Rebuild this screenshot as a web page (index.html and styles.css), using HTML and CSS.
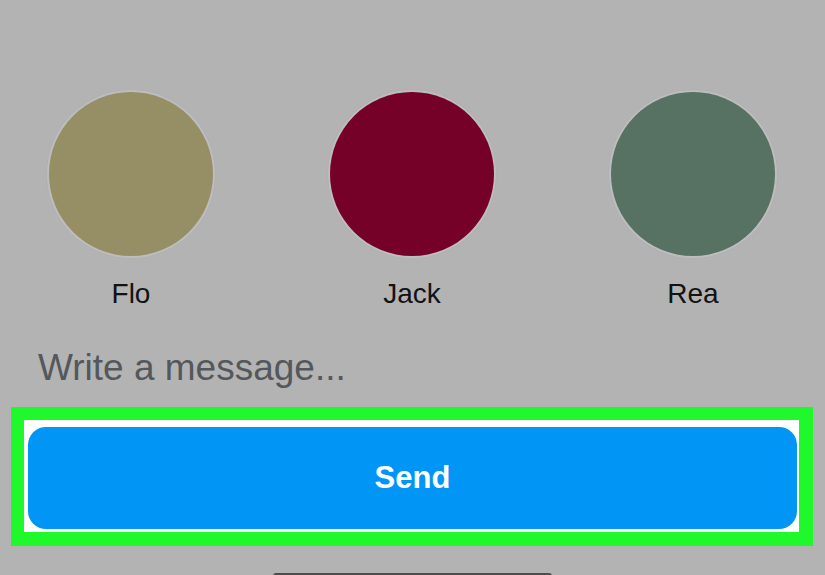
FILE: index.html
```html
<!DOCTYPE html>
<html lang="en">
<head>
<meta charset="utf-8">
<title>Send to</title>
<link rel="stylesheet" href="styles.css">
</head>
<body>
<div class="screen">
  <div class="contacts">
    <div class="contact">
      <div class="avatar avatar-flo"></div>
      <div class="name">Flo</div>
    </div>
    <div class="contact">
      <div class="avatar avatar-jack"></div>
      <div class="name">Jack</div>
    </div>
    <div class="contact">
      <div class="avatar avatar-rea"></div>
      <div class="name">Rea</div>
    </div>
  </div>
  <div class="message">Write a message...</div>
  <div class="highlight">
    <button class="send">Send</button>
  </div>
  <div class="home-indicator"></div>
</div>
</body>
</html>
```

FILE: styles.css
```css
html, body {
  margin: 0;
  padding: 0;
}
body {
  background: #b3b3b3;
  font-family: "Liberation Sans", Arial, sans-serif;
  width: 825px;
  height: 575px;
  overflow: hidden;
}
.screen {
  display: flex;
  flex-direction: column;
}
.contacts {
  display: flex;
  gap: 117px;
  padding-top: 92px;
  padding-left: 49px;
}
.contact {
  width: 164px;
  display: flex;
  flex-direction: column;
  align-items: center;
}
.avatar {
  width: 164px;
  height: 164px;
  border-radius: 50%;
  box-shadow: 0 0 0 2px #bdbdbd, 0 0 0 3px #afb1b5;
}
.avatar-flo { background: #968e65; }
.avatar-jack { background: #750028; }
.avatar-rea { background: #577162; }
.name {
  margin-top: 22px;
  font-size: 28px;
  line-height: 32px;
  color: #121212;
}
.message {
  margin-top: 36px;
  margin-left: 38px;
  font-size: 37px;
  line-height: 44px;
  color: #54585d;
}
.highlight {
  margin-top: 17px;
  margin-left: 11px;
  width: 769px;
  border: solid #1ff92c;
  border-width: 13px 14px 14px 13px;
  background: #ffffff;
  padding: 7px 2px 3px 4px;
}
.send {
  display: block;
  width: 769px;
  height: 102px;
  border: none;
  border-radius: 18px;
  background: #0195f5;
  color: #ffffff;
  font-family: "Liberation Sans", Arial, sans-serif;
  font-weight: 700;
  font-size: 31px;
  padding: 0;
}
.home-indicator {
  margin-top: 27px;
  margin-left: 273px;
  width: 279px;
  height: 6px;
  border-radius: 3px;
  background: #4d4d4d;
}
```
